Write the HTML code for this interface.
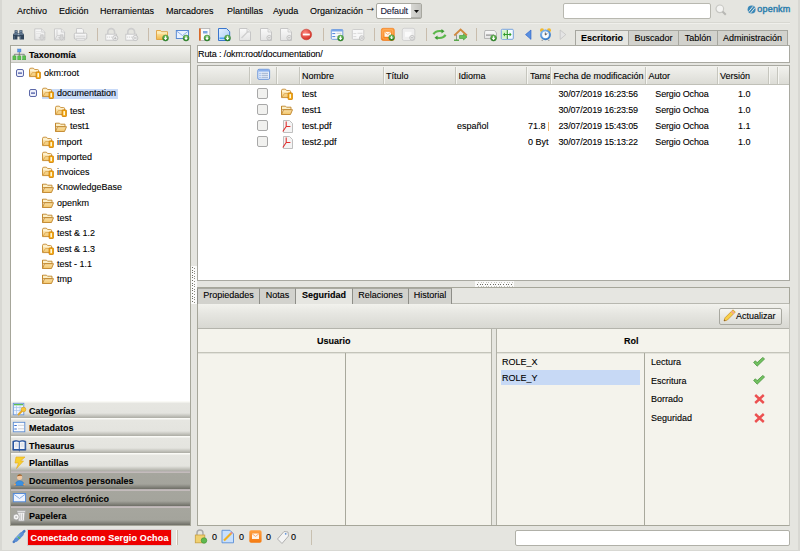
<!DOCTYPE html>
<html><head><meta charset="utf-8">
<style>
*{box-sizing:border-box;margin:0;padding:0}
html,body{width:800px;height:551px;overflow:hidden}
body{background:#e5e5e0;font-family:"Liberation Sans",sans-serif;font-size:9px;color:#000;position:relative}
.a{position:absolute}
.t{position:absolute;white-space:nowrap;line-height:11px;-webkit-text-stroke:0.1px currentColor}
svg.a{overflow:visible}
</style></head><body>
<svg width="0" height="0" style="position:absolute">
<defs>
<linearGradient id="gFold" x1="0" y1="0" x2="0" y2="1"><stop offset="0" stop-color="#fff6d8"/><stop offset="1" stop-color="#f2c56a"/></linearGradient>
<linearGradient id="gGreen" x1="0" y1="0" x2="0" y2="1"><stop offset="0" stop-color="#7ccc6a"/><stop offset="1" stop-color="#2f8a2a"/></linearGradient>
<symbol id="flock" viewBox="0 0 12 12">
 <path d="M0.5 2.6Q0.5 1.2 1.9 1.2H3.9Q4.9 1.2 5.4 2.1L5.7 2.6H8.6Q9.6 2.6 9.6 3.6V9.6H0.5Z" fill="url(#gFold)" stroke="#c4882c" stroke-width="0.9"/>
 <path d="M1.2 9L3.4 5.6H9.2" fill="none" stroke="#d8a24a" stroke-width="0.8"/>
 <path d="M1.2 3.6H9" stroke="#fff8e0" stroke-width="0.7"/>
 <rect x="7.1" y="4.9" width="4.3" height="6.6" rx="0.6" fill="#f7ac10" stroke="#cc7a00" stroke-width="0.8"/>
 <rect x="8.4" y="6.1" width="1.6" height="4.1" fill="#fff6d8"/>
</symbol>
<symbol id="fopen" viewBox="0 0 12 10">
 <path d="M0.5 1.2h4l1 1h4.5v2.5H0.5z" fill="#fbefc8" stroke="#c0852a" stroke-width="0.9"/>
 <path d="M0.5 9.5V1.2M0.5 9.5h9l2-4.8h-9z" fill="url(#gFold)" stroke="#c0852a" stroke-width="0.9"/>
</symbol>
<symbol id="pdf" viewBox="0 0 12 13">
 <path d="M1.5 0.5h6l3 3v9h-9z" fill="#f4f4f4" stroke="#b8b8b8" stroke-width="0.9"/>
 <path d="M4.2 1.5v5M4.2 6.5L0.8 11.5M4.2 6.5h4.2" fill="none" stroke="#e03030" stroke-width="1.1"/>
</symbol>
<symbol id="minus" viewBox="0 0 8 8">
 <rect x="0.5" y="0.5" width="7" height="7" rx="1.5" fill="#eef0fa" stroke="#5c68a8" stroke-width="1"/>
 <rect x="2" y="3.5" width="4" height="1.2" fill="#4050a0"/>
</symbol>
<symbol id="mag" viewBox="0 0 12 12">
 <circle cx="4.8" cy="4.8" r="3.8" fill="#f4f4f2" stroke="#c8c8c4" stroke-width="1.2"/>
 <path d="M7.5 7.5l3.3 3.3" stroke="#b8b8b4" stroke-width="2"/>
</symbol>
<symbol id="logo" viewBox="0 0 10 9">
 <circle cx="4.6" cy="4.5" r="4" fill="#3a88b8"/>
 <path d="M1.6 6.8L6.2 1.2M3.4 8.2L8 2.6" stroke="#e6e6e1" stroke-width="1"/>
</symbol>
<symbol id="check" viewBox="0 0 12 10">
 <path d="M0.6 5.4L2.4 3.8 4.2 5.6 9.8 0.4 11.6 2 4.2 9.2z" fill="#72c060" stroke="#3f8e34" stroke-width="0.7" stroke-linejoin="round"/>
</symbol>
<symbol id="cross" viewBox="0 0 11 10">
 <path d="M1.2 1L9.8 9M9.8 1L1.2 9" fill="none" stroke="#ec5050" stroke-width="2.4"/>
</symbol>
<symbol id="cb" viewBox="0 0 11 11">
 <rect x="0.5" y="0.5" width="10" height="10" rx="1.5" fill="#f1f1ef" stroke="#a8a8a8" stroke-width="1"/>
</symbol>
<symbol id="addg" viewBox="0 0 6 6">
 <circle cx="3" cy="3" r="2.8" fill="url(#gGreen)" stroke="#2a7a24" stroke-width="0.4"/>
 <path d="M3 1.3v2.6M1.9 2.9L3 4.2 4.1 2.9" fill="none" stroke="#fff" stroke-width="0.9"/>
</symbol>
</defs></svg>

<div class="a" style="left:0px;top:0px;width:2px;height:551px;background:#d8d8d3"></div>
<div class="a" style="left:798px;top:0px;width:2px;height:551px;background:#d8d8d3"></div>
<div class="a" style="left:0px;top:550px;width:800px;height:1px;background:#d8d8d3"></div>
<div class="t" style="left:17px;top:6.0px;">Archivo</div>
<div class="t" style="left:59px;top:6.0px;">Edición</div>
<div class="t" style="left:100px;top:6.0px;">Herramientas</div>
<div class="t" style="left:166px;top:6.0px;">Marcadores</div>
<div class="t" style="left:227px;top:6.0px;">Plantillas</div>
<div class="t" style="left:273px;top:6.0px;">Ayuda</div>
<div class="t" style="left:310px;top:6.0px;">Organización</div>
<div class="t" style="left:364.5px;top:1.5px;font-size:11.5px">→</div>
<div class="a" style="left:376px;top:3px;width:46px;height:16px;background:#fff;border:1px solid #a8a8a0;border-radius:2px"></div>
<div class="a" style="left:411px;top:4px;width:10px;height:14px;background:linear-gradient(90deg,#d8d8d4,#c4c4c0);border-bottom:1px solid #b0b0ac"></div>
<svg class="a" style="left:413.5px;top:10px" width="5" height="3"><path d="M0 0h5L2.5 3z" fill="#111"/></svg>
<div class="t" style="left:380.5px;top:6.0px;color:#1a1c3a;letter-spacing:-0.15px">Default</div>
<div class="a" style="left:563px;top:3px;width:148px;height:16px;background:#fff;border:1px solid #b8b8b0;border-radius:2px"></div>
<svg class="a" style="left:715px;top:4px" width="12" height="12"><use href="#mag" width="12" height="12"/></svg>
<svg class="a" style="left:747px;top:5px" width="10" height="9"><use href="#logo" width="10" height="9"/></svg>
<div class="t" style="left:757.3px;top:4.300000000000001px;font-size:9px;color:#2f80ad;letter-spacing:0.2px;-webkit-text-stroke:0.45px #2f80ad">openkm</div>
<div class="a" style="left:10px;top:22px;width:780px;height:1px;background:#d8d8d2"></div>
<div class="a" style="left:10px;top:23px;width:780px;height:1px;background:#efefeb"></div>
<div class="a" style="left:575px;top:30px;width:54px;height:16px;background:#e6e6e1;border:1px solid #a6a69f;border-bottom:none"></div>
<div class="a" style="left:628px;top:30px;width:51px;height:16px;background:#d2d2cd;border:1px solid #a6a69f;border-bottom:none"></div>
<div class="a" style="left:678px;top:30px;width:40px;height:16px;background:#d2d2cd;border:1px solid #a6a69f;border-bottom:none"></div>
<div class="a" style="left:717px;top:30px;width:71px;height:16px;background:#d2d2cd;border:1px solid #a6a69f;border-bottom:none"></div>
<div class="t" style="left:575px;top:32.5px;width:54px;text-align:center;font-weight:bold">Escritorio</div>
<div class="t" style="left:628px;top:32.5px;width:51px;text-align:center;">Buscador</div>
<div class="t" style="left:678px;top:32.5px;width:40px;text-align:center;">Tablón</div>
<div class="t" style="left:717px;top:32.5px;width:71px;text-align:center;">Administración</div>
<div class="a" style="left:97px;top:28px;width:1px;height:13px;background:#c8bcac"></div>
<div class="a" style="left:148px;top:28px;width:1px;height:13px;background:#c8bcac"></div>
<div class="a" style="left:323px;top:28px;width:1px;height:13px;background:#c8bcac"></div>
<div class="a" style="left:374px;top:28px;width:1px;height:13px;background:#c8bcac"></div>
<div class="a" style="left:426px;top:28px;width:1px;height:13px;background:#c8bcac"></div>
<div class="a" style="left:476px;top:28px;width:1px;height:13px;background:#c8bcac"></div>
<div class="a" style="left:10px;top:45px;width:181px;height:481px;background:#fff;border:1px solid #a6a69a"></div>
<div class="a" style="left:11px;top:46px;width:179px;height:17px;background:linear-gradient(#f3f3ef,#dcdcd6);border-bottom:1px solid #c4c4bc"></div>
<div class="t" style="left:29px;top:50.2px;font-weight:bold">Taxonomía</div>
<svg class="a" style="left:16px;top:69px" width="8" height="8"><use href="#minus" width="8" height="8"/></svg>
<svg class="a" style="left:29px;top:67px" width="12" height="12"><use href="#flock" width="12" height="12"/></svg>
<div class="t" style="left:44px;top:67.5px;">okm:root</div>
<div class="a" style="left:42px;top:89px;width:76px;height:10px;background:#c8daf8"></div>
<svg class="a" style="left:29px;top:89px" width="8" height="8"><use href="#minus" width="8" height="8"/></svg>
<svg class="a" style="left:42px;top:87px" width="12" height="12"><use href="#flock" width="12" height="12"/></svg>
<div class="t" style="left:57px;top:88.1px;">documentation</div>
<svg class="a" style="left:55px;top:105px" width="12" height="12"><use href="#flock" width="12" height="12"/></svg>
<div class="t" style="left:70px;top:105.5px;">test</div>
<svg class="a" style="left:55px;top:122px" width="12" height="10"><use href="#fopen" width="12" height="10"/></svg>
<div class="t" style="left:70px;top:121.0px;">test1</div>
<svg class="a" style="left:42px;top:136px" width="12" height="12"><use href="#flock" width="12" height="12"/></svg>
<div class="t" style="left:57px;top:136.5px;">import</div>
<svg class="a" style="left:42px;top:151px" width="12" height="12"><use href="#flock" width="12" height="12"/></svg>
<div class="t" style="left:57px;top:151.5px;">imported</div>
<svg class="a" style="left:42px;top:166px" width="12" height="12"><use href="#flock" width="12" height="12"/></svg>
<div class="t" style="left:57px;top:166.8px;">invoices</div>
<svg class="a" style="left:42px;top:183px" width="12" height="10"><use href="#fopen" width="12" height="10"/></svg>
<div class="t" style="left:57px;top:182.1px;">KnowledgeBase</div>
<svg class="a" style="left:42px;top:198px" width="12" height="10"><use href="#fopen" width="12" height="10"/></svg>
<div class="t" style="left:57px;top:197.5px;">openkm</div>
<svg class="a" style="left:42px;top:213px" width="12" height="10"><use href="#fopen" width="12" height="10"/></svg>
<div class="t" style="left:57px;top:212.5px;">test</div>
<svg class="a" style="left:42px;top:227px" width="12" height="12"><use href="#flock" width="12" height="12"/></svg>
<div class="t" style="left:57px;top:228.0px;">test &amp; 1.2</div>
<svg class="a" style="left:42px;top:243px" width="12" height="12"><use href="#flock" width="12" height="12"/></svg>
<div class="t" style="left:57px;top:243.5px;">test &amp; 1.3</div>
<svg class="a" style="left:42px;top:259px" width="12" height="10"><use href="#fopen" width="12" height="10"/></svg>
<div class="t" style="left:57px;top:258.5px;">test - 1.1</div>
<svg class="a" style="left:42px;top:274px" width="12" height="10"><use href="#fopen" width="12" height="10"/></svg>
<div class="t" style="left:57px;top:273.9px;">tmp</div>
<div class="a" style="left:11px;top:401px;width:179px;height:17px;background:linear-gradient(#fafaf6 0,#fafaf6 1px,#e6e6e1 2px,#e4e4df calc(100% - 5px),#acaca4 100%)"></div>
<div class="t" style="left:29px;top:405.8px;font-weight:bold">Categorías</div>
<div class="a" style="left:11px;top:418px;width:179px;height:18px;background:linear-gradient(#fafaf6 0,#fafaf6 1px,#e6e6e1 2px,#e4e4df calc(100% - 5px),#acaca4 100%)"></div>
<div class="t" style="left:29px;top:422.8px;font-weight:bold">Metadatos</div>
<div class="a" style="left:11px;top:436px;width:179px;height:17px;background:linear-gradient(#fafaf6 0,#fafaf6 1px,#e6e6e1 2px,#e4e4df calc(100% - 5px),#acaca4 100%)"></div>
<div class="t" style="left:29px;top:440.8px;font-weight:bold">Thesaurus</div>
<div class="a" style="left:11px;top:453px;width:179px;height:18px;background:linear-gradient(#fafaf6 0,#fafaf6 1px,#e6e6e1 2px,#e4e4df calc(100% - 5px),#acaca4 100%)"></div>
<div class="t" style="left:29px;top:457.8px;font-weight:bold">Plantillas</div>
<div class="a" style="left:11px;top:471px;width:179px;height:18px;background:linear-gradient(#b4aeae 0,#c4bcbc 1.5px,#a6a69e 2.5px,#a4a49c calc(100% - 5px),#6e6e66 100%)"></div>
<div class="t" style="left:29px;top:475.8px;font-weight:bold">Documentos personales</div>
<div class="a" style="left:11px;top:489px;width:179px;height:17px;background:linear-gradient(#b4aeae 0,#c4bcbc 1.5px,#a6a69e 2.5px,#a4a49c calc(100% - 5px),#6e6e66 100%)"></div>
<div class="t" style="left:29px;top:493.8px;font-weight:bold">Correo electrónico</div>
<div class="a" style="left:11px;top:506px;width:179px;height:19px;background:linear-gradient(#b4aeae 0,#c4bcbc 1.5px,#a6a69e 2.5px,#a4a49c calc(100% - 5px),#6e6e66 100%)"></div>
<div class="t" style="left:29px;top:510.79999999999995px;font-weight:bold">Papelera</div>
<div class="a" style="left:197px;top:45px;width:593px;height:18px;background:#fff;border:1px solid #a9a9a1"></div>
<div class="t" style="left:198px;top:48.5px;letter-spacing:-0.11px">Ruta : /okm:root/documentation/</div>
<div class="a" style="left:197px;top:65px;width:593px;height:216px;background:#fff;border:1px solid #a9a9a1"></div>
<div class="a" style="left:198px;top:66px;width:591px;height:19px;background:linear-gradient(#f2f2ee,#dcdcd6);border-bottom:1px solid #c0c0b8"></div>
<div class="a" style="left:249px;top:67px;width:1px;height:17px;background:#c6c6be"></div>
<div class="a" style="left:250px;top:67px;width:1px;height:17px;background:#f6f6f2"></div>
<div class="a" style="left:276px;top:67px;width:1px;height:17px;background:#c6c6be"></div>
<div class="a" style="left:277px;top:67px;width:1px;height:17px;background:#f6f6f2"></div>
<div class="a" style="left:299px;top:67px;width:1px;height:17px;background:#c6c6be"></div>
<div class="a" style="left:300px;top:67px;width:1px;height:17px;background:#f6f6f2"></div>
<div class="a" style="left:383px;top:67px;width:1px;height:17px;background:#c6c6be"></div>
<div class="a" style="left:384px;top:67px;width:1px;height:17px;background:#f6f6f2"></div>
<div class="a" style="left:455px;top:67px;width:1px;height:17px;background:#c6c6be"></div>
<div class="a" style="left:456px;top:67px;width:1px;height:17px;background:#f6f6f2"></div>
<div class="a" style="left:526px;top:67px;width:1px;height:17px;background:#c6c6be"></div>
<div class="a" style="left:527px;top:67px;width:1px;height:17px;background:#f6f6f2"></div>
<div class="a" style="left:550px;top:67px;width:1px;height:17px;background:#c6c6be"></div>
<div class="a" style="left:551px;top:67px;width:1px;height:17px;background:#f6f6f2"></div>
<div class="a" style="left:645px;top:67px;width:1px;height:17px;background:#c6c6be"></div>
<div class="a" style="left:646px;top:67px;width:1px;height:17px;background:#f6f6f2"></div>
<div class="a" style="left:717px;top:67px;width:1px;height:17px;background:#c6c6be"></div>
<div class="a" style="left:718px;top:67px;width:1px;height:17px;background:#f6f6f2"></div>
<div class="a" style="left:768px;top:67px;width:1px;height:17px;background:#c6c6be"></div>
<div class="a" style="left:769px;top:67px;width:1px;height:17px;background:#f6f6f2"></div>
<div class="a" style="left:777px;top:67px;width:1px;height:17px;background:#c6c6be"></div>
<div class="a" style="left:778px;top:67px;width:1px;height:17px;background:#f6f6f2"></div>
<div class="t" style="left:302px;top:70.8px;">Nombre</div>
<div class="t" style="left:386px;top:70.8px;">Título</div>
<div class="t" style="left:458.5px;top:70.8px;">Idioma</div>
<div class="t" style="left:553.5px;top:70.8px;">Fecha de modificación</div>
<div class="t" style="left:648.5px;top:70.8px;">Autor</div>
<div class="t" style="left:720px;top:70.8px;">Versión</div>
<div class="t" style="left:530px;top:70.8px;width:19.5px;overflow:hidden">Tamaño</div>
<svg class="a" style="left:257px;top:88px" width="11" height="11"><use href="#cb" width="11" height="11"/></svg>
<svg class="a" style="left:281px;top:88px" width="12" height="12"><use href="#flock" width="12" height="12"/></svg>
<div class="t" style="left:302px;top:88.7px;">test</div>
<div class="t" style="left:558.5px;top:88.7px;letter-spacing:-0.17px">30/07/2019 16:23:56</div>
<div class="t" style="left:655.3px;top:88.7px;letter-spacing:-0.15px">Sergio Ochoa</div>
<div class="t" style="left:738px;top:88.7px;">1.0</div>
<svg class="a" style="left:257px;top:104px" width="11" height="11"><use href="#cb" width="11" height="11"/></svg>
<svg class="a" style="left:281px;top:105px" width="12" height="10"><use href="#fopen" width="12" height="10"/></svg>
<div class="t" style="left:302px;top:104.7px;">test1</div>
<div class="t" style="left:558.5px;top:104.7px;letter-spacing:-0.17px">30/07/2019 16:23:59</div>
<div class="t" style="left:655.3px;top:104.7px;letter-spacing:-0.15px">Sergio Ochoa</div>
<div class="t" style="left:738px;top:104.7px;">1.0</div>
<svg class="a" style="left:257px;top:120px" width="11" height="11"><use href="#cb" width="11" height="11"/></svg>
<svg class="a" style="left:282px;top:120px" width="12" height="13"><use href="#pdf" width="12" height="13"/></svg>
<div class="t" style="left:302px;top:120.7px;">test.pdf</div>
<div class="t" style="left:457px;top:120.7px;">español</div>
<div class="t" style="left:528px;top:120.7px;width:21px;overflow:hidden">71.8 |</div>
<div class="t" style="left:558.5px;top:120.7px;letter-spacing:-0.17px">23/07/2019 15:43:05</div>
<div class="t" style="left:655.3px;top:120.7px;letter-spacing:-0.15px">Sergio Ochoa</div>
<div class="t" style="left:738px;top:120.7px;">1.1</div>
<svg class="a" style="left:257px;top:136px" width="11" height="11"><use href="#cb" width="11" height="11"/></svg>
<svg class="a" style="left:282px;top:136px" width="12" height="13"><use href="#pdf" width="12" height="13"/></svg>
<div class="t" style="left:302px;top:136.7px;">test2.pdf</div>
<div class="t" style="left:528px;top:136.7px;width:21px;overflow:hidden">0 Byt</div>
<div class="t" style="left:558.5px;top:136.7px;letter-spacing:-0.17px">30/07/2019 15:13:22</div>
<div class="t" style="left:655.3px;top:136.7px;letter-spacing:-0.15px">Sergio Ochoa</div>
<div class="t" style="left:738px;top:136.7px;">1.0</div>
<div class="a" style="left:197px;top:287px;width:593px;height:17px;background:#e6e6e1;border-top:1px solid #a6a69a;border-right:1px solid #a6a69a;border-bottom:1px solid #b8b8b0"></div>
<svg class="a" style="left:0;top:0" width="800" height="551" shape-rendering="crispEdges"><rect x="475" y="281" width="39" height="6" fill="#fbfbfa"/><rect x="477" y="284" width="1" height="1" fill="#6c6c62"/><rect x="478" y="282" width="1" height="1" fill="#c4c4ba"/><rect x="478" y="286" width="1" height="1" fill="#c4c4ba"/><rect x="480" y="284" width="1" height="1" fill="#6c6c62"/><rect x="481" y="282" width="1" height="1" fill="#c4c4ba"/><rect x="481" y="286" width="1" height="1" fill="#c4c4ba"/><rect x="482" y="284" width="1" height="1" fill="#6c6c62"/><rect x="483" y="282" width="1" height="1" fill="#c4c4ba"/><rect x="483" y="286" width="1" height="1" fill="#c4c4ba"/><rect x="485" y="284" width="1" height="1" fill="#6c6c62"/><rect x="486" y="282" width="1" height="1" fill="#c4c4ba"/><rect x="486" y="286" width="1" height="1" fill="#c4c4ba"/><rect x="487" y="284" width="1" height="1" fill="#6c6c62"/><rect x="488" y="282" width="1" height="1" fill="#c4c4ba"/><rect x="488" y="286" width="1" height="1" fill="#c4c4ba"/><rect x="490" y="284" width="1" height="1" fill="#6c6c62"/><rect x="491" y="282" width="1" height="1" fill="#c4c4ba"/><rect x="491" y="286" width="1" height="1" fill="#c4c4ba"/><rect x="493" y="284" width="1" height="1" fill="#6c6c62"/><rect x="494" y="282" width="1" height="1" fill="#c4c4ba"/><rect x="494" y="286" width="1" height="1" fill="#c4c4ba"/><rect x="495" y="284" width="1" height="1" fill="#6c6c62"/><rect x="496" y="282" width="1" height="1" fill="#c4c4ba"/><rect x="496" y="286" width="1" height="1" fill="#c4c4ba"/><rect x="498" y="284" width="1" height="1" fill="#6c6c62"/><rect x="499" y="282" width="1" height="1" fill="#c4c4ba"/><rect x="499" y="286" width="1" height="1" fill="#c4c4ba"/><rect x="500" y="284" width="1" height="1" fill="#6c6c62"/><rect x="501" y="282" width="1" height="1" fill="#c4c4ba"/><rect x="501" y="286" width="1" height="1" fill="#c4c4ba"/><rect x="503" y="284" width="1" height="1" fill="#6c6c62"/><rect x="504" y="282" width="1" height="1" fill="#c4c4ba"/><rect x="504" y="286" width="1" height="1" fill="#c4c4ba"/><rect x="506" y="284" width="1" height="1" fill="#6c6c62"/><rect x="507" y="282" width="1" height="1" fill="#c4c4ba"/><rect x="507" y="286" width="1" height="1" fill="#c4c4ba"/><rect x="508" y="284" width="1" height="1" fill="#6c6c62"/><rect x="509" y="282" width="1" height="1" fill="#c4c4ba"/><rect x="509" y="286" width="1" height="1" fill="#c4c4ba"/><rect x="511" y="284" width="1" height="1" fill="#6c6c62"/><rect x="512" y="282" width="1" height="1" fill="#c4c4ba"/><rect x="512" y="286" width="1" height="1" fill="#c4c4ba"/><rect x="191" y="266" width="6" height="38" fill="#fbfbfa"/><rect x="192" y="267" width="1" height="1" fill="#6c6c62"/><rect x="194" y="268" width="1" height="1" fill="#8c8c82"/><rect x="192" y="270" width="1" height="1" fill="#6c6c62"/><rect x="194" y="271" width="1" height="1" fill="#8c8c82"/><rect x="192" y="272" width="1" height="1" fill="#6c6c62"/><rect x="194" y="273" width="1" height="1" fill="#8c8c82"/><rect x="192" y="275" width="1" height="1" fill="#6c6c62"/><rect x="194" y="276" width="1" height="1" fill="#8c8c82"/><rect x="192" y="277" width="1" height="1" fill="#6c6c62"/><rect x="194" y="278" width="1" height="1" fill="#8c8c82"/><rect x="192" y="280" width="1" height="1" fill="#6c6c62"/><rect x="194" y="281" width="1" height="1" fill="#8c8c82"/><rect x="192" y="283" width="1" height="1" fill="#6c6c62"/><rect x="194" y="284" width="1" height="1" fill="#8c8c82"/><rect x="192" y="285" width="1" height="1" fill="#6c6c62"/><rect x="194" y="286" width="1" height="1" fill="#8c8c82"/><rect x="192" y="288" width="1" height="1" fill="#6c6c62"/><rect x="194" y="289" width="1" height="1" fill="#8c8c82"/><rect x="192" y="290" width="1" height="1" fill="#6c6c62"/><rect x="194" y="291" width="1" height="1" fill="#8c8c82"/><rect x="192" y="293" width="1" height="1" fill="#6c6c62"/><rect x="194" y="294" width="1" height="1" fill="#8c8c82"/><rect x="192" y="296" width="1" height="1" fill="#6c6c62"/><rect x="194" y="297" width="1" height="1" fill="#8c8c82"/><rect x="192" y="298" width="1" height="1" fill="#6c6c62"/><rect x="194" y="299" width="1" height="1" fill="#8c8c82"/><rect x="192" y="301" width="1" height="1" fill="#6c6c62"/><rect x="194" y="302" width="1" height="1" fill="#8c8c82"/></svg>
<div class="a" style="left:197px;top:288px;width:63px;height:17px;background:#d2d2cd;border:1px solid #8e8e88;border-bottom:none;border-top-color:#a9a9a1"></div>
<div class="a" style="left:259px;top:288px;width:37px;height:17px;background:#d2d2cd;border:1px solid #8e8e88;border-bottom:none;border-top-color:#a9a9a1"></div>
<div class="a" style="left:295px;top:288px;width:58px;height:17px;background:#e6e6e1;border:1px solid #8e8e88;border-bottom:none;border-top-color:#a9a9a1"></div>
<div class="a" style="left:352px;top:288px;width:57px;height:17px;background:#d2d2cd;border:1px solid #8e8e88;border-bottom:none;border-top-color:#a9a9a1"></div>
<div class="a" style="left:408px;top:288px;width:44px;height:17px;background:#d2d2cd;border:1px solid #8e8e88;border-bottom:none;border-top-color:#a9a9a1"></div>
<div class="t" style="left:197px;top:289.5px;width:63px;text-align:center;">Propiedades</div>
<div class="t" style="left:259px;top:289.5px;width:37px;text-align:center;">Notas</div>
<div class="t" style="left:295px;top:289.5px;width:58px;text-align:center;font-weight:bold">Seguridad</div>
<div class="t" style="left:352px;top:289.5px;width:57px;text-align:center;">Relaciones</div>
<div class="t" style="left:408px;top:289.5px;width:44px;text-align:center;">Historial</div>
<div class="a" style="left:197px;top:304px;width:593px;height:222px;background:#f4f3ec;border:1px solid #a6a69a;border-right-color:#c4c4bc;border-top:none"></div>
<div class="a" style="left:198px;top:304px;width:591px;height:25px;background:linear-gradient(#f2f2ed,#e6e6e1 40%,#d8d8d2);border-bottom:1px solid #b4b4ac"></div>
<div class="a" style="left:719px;top:308px;width:63px;height:17px;background:linear-gradient(#f6f6f2,#dcdcd6);border:1px solid #a8a8a0;border-radius:2px"></div>
<div class="t" style="left:736px;top:311.0px;">Actualizar</div>
<div class="a" style="left:491px;top:329px;width:6px;height:196px;background:#e6e6e0;border-left:1px solid #b0b0a6;border-right:1px solid #b0b0a6"></div>
<div class="a" style="left:198px;top:352px;width:293px;height:1px;background:#c4c4ba"></div>
<div class="a" style="left:198px;top:353px;width:293px;height:1px;background:#e2e2da"></div>
<div class="a" style="left:497px;top:352px;width:292px;height:1px;background:#c4c4ba"></div>
<div class="a" style="left:497px;top:353px;width:292px;height:1px;background:#e2e2da"></div>
<div class="a" style="left:345px;top:353px;width:1px;height:172px;background:#a8a89c"></div>
<div class="a" style="left:644px;top:353px;width:1px;height:172px;background:#a8a89c"></div>
<div class="t" style="left:317px;top:335.7px;font-weight:bold">Usuario</div>
<div class="t" style="left:624px;top:335.7px;font-weight:bold">Rol</div>
<div class="t" style="left:502px;top:356.5px;">ROLE_X</div>
<div class="a" style="left:501px;top:370px;width:139px;height:15px;background:#c7d9f5"></div>
<div class="t" style="left:502px;top:372.7px;">ROLE_Y</div>
<div class="t" style="left:651px;top:357.3px;">Lectura</div>
<svg class="a" style="left:753px;top:357px" width="12" height="10"><use href="#check" width="12" height="10"/></svg>
<div class="t" style="left:651px;top:375.9px;">Escritura</div>
<svg class="a" style="left:753px;top:375px" width="12" height="10"><use href="#check" width="12" height="10"/></svg>
<div class="t" style="left:651px;top:393.9px;">Borrado</div>
<svg class="a" style="left:754px;top:394px" width="11" height="10"><use href="#cross" width="11" height="10"/></svg>
<div class="t" style="left:651px;top:412.5px;">Seguridad</div>
<svg class="a" style="left:754px;top:413px" width="11" height="10"><use href="#cross" width="11" height="10"/></svg>
<div class="a" style="left:27px;top:529px;width:145px;height:17px;background:#ee0000;border:1px solid #d4cccc"></div>
<div class="t" style="left:30.5px;top:532.8px;font-weight:bold;color:#fff;letter-spacing:0.15px">Conectado como Sergio Ochoa</div>
<div class="a" style="left:311px;top:530px;width:1px;height:15px;background:#c8c0b0"></div>
<div class="a" style="left:177px;top:530px;width:1px;height:15px;background:#c8c0b0"></div>
<div class="a" style="left:176px;top:530px;width:1px;height:15px;background:#fafaf8"></div>
<div class="t" style="left:212px;top:532.0px;">0</div>
<div class="t" style="left:239px;top:532.0px;">0</div>
<div class="t" style="left:266px;top:532.0px;">0</div>
<div class="t" style="left:291px;top:532.0px;">0</div>
<div class="a" style="left:515px;top:530px;width:275px;height:16px;background:#fff;border:1px solid #b0b0a8;border-radius:2px"></div>
<svg class="a" style="left:0;top:0" width="800" height="551" viewBox="0 0 800 551">
<defs>
<linearGradient id="gG" x1="0" y1="0" x2="0" y2="1"><stop offset="0" stop-color="#86d070"/><stop offset="1" stop-color="#1f7a1c"/></linearGradient>
<linearGradient id="gBlueDoc" x1="0" y1="0" x2="1" y2="1"><stop offset="0" stop-color="#e4f0ff"/><stop offset="1" stop-color="#a8ccf4"/></linearGradient>
<linearGradient id="gFoldT" x1="0" y1="0" x2="0" y2="1"><stop offset="0" stop-color="#fff2c0"/><stop offset="1" stop-color="#f0b848"/></linearGradient>
<linearGradient id="gOr" x1="0" y1="0" x2="0" y2="1"><stop offset="0" stop-color="#ffa040"/><stop offset="1" stop-color="#f47a10"/></linearGradient>
<linearGradient id="gGray" x1="0" y1="0" x2="0" y2="1"><stop offset="0" stop-color="#fafafa"/><stop offset="1" stop-color="#e4e4e4"/></linearGradient>
<radialGradient id="gRed" cx="0.4" cy="0.35" r="0.7"><stop offset="0" stop-color="#ff8a80"/><stop offset="1" stop-color="#d02a20"/></radialGradient>
<radialGradient id="gClock" cx="0.4" cy="0.35" r="0.7"><stop offset="0" stop-color="#a8d4ff"/><stop offset="1" stop-color="#2a70c0"/></radialGradient>
<symbol id="add" viewBox="0 0 7 7" overflow="visible"><circle cx="3.5" cy="3.5" r="3.2" fill="url(#gG)" stroke="#1c6e1a" stroke-width="0.5"/><path d="M3.5 1.6v3M2.2 3.3L3.5 5 4.8 3.3" fill="none" stroke="#fff" stroke-width="1.1"/></symbol>
<symbol id="addgray" viewBox="0 0 7 7" overflow="visible"><circle cx="3.5" cy="3.5" r="3" fill="#e8e8e8" stroke="#b0b0b0" stroke-width="0.8"/><path d="M2 3.5h3" stroke="#b0b0b0" stroke-width="1"/></symbol>
<symbol id="gdoc" viewBox="0 0 12 13" overflow="visible"><path d="M0.5 0.5h7.5l3.5 3.5v8.5H0.5z" fill="url(#gGray)" stroke="#c6c6c6" stroke-width="1"/><path d="M8 0.5v3.5h3.5" fill="#eee" stroke="#c6c6c6" stroke-width="0.8"/></symbol>
</defs>


<!-- taxonomy icon -->
<rect x="17.7" y="49" width="3.3" height="3" fill="#5a9ae8" stroke="#3a70c0" stroke-width="0.4"/>
<path d="M19.3 52v2.2M14.4 54.3h10M14.4 54.3v1.5M19.3 54.3v1.5M24.2 54.3v1.5" stroke="#606060" stroke-width="0.7" fill="none"/>
<rect x="12.9" y="55.9" width="3.1" height="3.9" fill="#5cc050" stroke="#2e9a2a" stroke-width="0.4"/>
<rect x="17.8" y="55.9" width="3.1" height="3.9" fill="#5cc050" stroke="#2e9a2a" stroke-width="0.4"/>
<rect x="22.7" y="55.9" width="3.1" height="3.9" fill="#5cc050" stroke="#2e9a2a" stroke-width="0.4"/>
<!-- column list icon -->
<rect x="257.8" y="69.3" width="11.8" height="10" rx="1.2" fill="#e8f0fc" stroke="#5a8ad8" stroke-width="0.9"/>
<rect x="258.3" y="69.8" width="10.8" height="1.8" fill="#8ab0ec"/>
<path d="M259.5 73.3h1M259.5 75.3h1M259.5 77.3h1" stroke="#4a80d8" stroke-width="0.9"/>
<path d="M261.5 73.3h6.5M261.5 75.3h6.5M261.5 77.3h6.5" stroke="#8aa0c0" stroke-width="0.8"/>
<!-- TOOLBAR -->
<!-- binoculars -->
<path d="M13 39.6V35.2Q13 33.2 14.6 33V30.3H17.6V33.2H19.4V30.3H22.4V33Q24 33.2 24 35.2V39.6H19.6V36.4H17.4V39.6Z" fill="#30445a"/>
<path d="M15.2 30.8h1.8v1.8h-1.8zM20 30.8h1.8v1.8h-1.8z" fill="#7890aa"/>
<path d="M14 34h3M20 34h3" stroke="#8aa2bc" stroke-width="1"/>
<path d="M14.2 36v3M20.6 36v3" stroke="#5a7088" stroke-width="0.9"/>
<path d="M17.4 33.6h2.2v1.6h-2.2z" fill="#a0b4c8"/>
<!-- doc dl gray -->
<use href="#gdoc" x="34.3" y="28.3" width="11" height="12.2"/>
<path d="M36 31.5h6M36 33.5h5" stroke="#e0e0e0" stroke-width="0.7"/>
<path d="M40.6 34.8h2.6v2.6h1.6l-2.9 3-2.9-3h1.6z" fill="#d6d6d6" stroke="#c0c0c0" stroke-width="0.6"/>
<use href="#gdoc" x="54" y="28.3" width="11" height="12.2"/>
<path d="M57 30v5.5l-2 4M57 35.5h3" fill="none" stroke="#cfcfcf" stroke-width="0.9"/>
<path d="M60.3 34.8h2.6v2.6h1.6l-2.9 3-2.9-3h1.6z" fill="#d6d6d6" stroke="#c0c0c0" stroke-width="0.6"/>
<!-- printer -->
<path d="M76.5 28.5h5.5l1.5 1.5v3.5h-7z" fill="#f6f6f6" stroke="#c8c8c8" stroke-width="0.9"/>
<rect x="74.3" y="33.2" width="12.5" height="6" rx="1.2" fill="url(#gGray)" stroke="#c0c0c0" stroke-width="0.9"/>
<rect x="76" y="35.6" width="9" height="1.4" fill="#dcdcdc"/>
<rect x="76.3" y="39" width="8.5" height="1.5" fill="#f4f4f4" stroke="#c8c8c8" stroke-width="0.6"/>
<!-- locks gray -->
<g fill="none" stroke="#cdcdcd" stroke-width="1.6"><path d="M107.8 34.3v-2.3a3.4 3.4 0 0 1 6.8 0v2.3"/><path d="M127.8 34.3v-2.3a3.4 3.4 0 0 1 6.8 0v2.3"/></g>
<rect x="105.8" y="34.2" width="10.8" height="6" fill="#f8f8f8" stroke="#c6c6c6" stroke-width="0.9"/>
<rect x="125.8" y="34.2" width="10.8" height="6" fill="#f8f8f8" stroke="#c6c6c6" stroke-width="0.9"/>
<path d="M107 37.2h6M127 37.2h6" stroke="#d8d8d8" stroke-width="1.2" stroke-dasharray="1.2 0.8"/>
<circle cx="115.3" cy="38" r="2.6" fill="#eeeeee" stroke="#bdbdbd" stroke-width="0.8"/>
<path d="M115.3 36.8v2.2M114.3 38.2l1 1 1-1" fill="none" stroke="#a8a8a8" stroke-width="0.7"/>
<circle cx="135.3" cy="38" r="2.6" fill="#eeeeee" stroke="#bdbdbd" stroke-width="0.8"/>
<path d="M134 38h2.6" stroke="#a8a8a8" stroke-width="0.8"/>
<!-- folder add -->
<path d="M156.5 30.5h4l1 1.2h6v7.8h-11z" fill="url(#gFoldT)" stroke="#e0a040" stroke-width="0.9"/>
<path d="M157 33h10" stroke="#fff6d0" stroke-width="0.8"/>
<use href="#add" x="162.3" y="34.8" width="6.5" height="6.5"/>
<!-- mail add -->
<rect x="176.3" y="30.5" width="12.2" height="8" fill="#eaf2ff" stroke="#4a80d0" stroke-width="0.9"/>
<path d="M176.5 31l6 4.5 6-4.5" fill="none" stroke="#7aa0e0" stroke-width="0.8"/>
<use href="#add" x="182.8" y="34.8" width="6.5" height="6.5"/>
<!-- notebook add -->
<rect x="199.5" y="28.5" width="10.3" height="12" fill="#fafafa" stroke="#b8b8b8" stroke-width="0.9"/>
<rect x="199" y="28.5" width="1.8" height="12" fill="#d86a2a"/>
<rect x="203" y="31" width="4.5" height="2.5" fill="#7ea6e0"/>
<use href="#add" x="203.8" y="34.8" width="6.5" height="6.5"/>
<!-- blue doc add -->
<path d="M218.5 28.5h8l3.2 3.2v8.8h-11.2z" fill="url(#gBlueDoc)" stroke="#3a76cc" stroke-width="1"/>
<rect x="219.5" y="37.5" width="6" height="1.5" fill="#4aa0f0"/>
<use href="#add" x="224.3" y="34.8" width="6.5" height="6.5"/>
<!-- edit gray -->
<use href="#gdoc" x="239" y="28" width="12" height="13"/>
<path d="M241.5 38l7-7" stroke="#d0d0d0" stroke-width="1.5"/>
<use href="#gdoc" x="260" y="28" width="12" height="13"/>
<use href="#addgray" x="266.5" y="35" width="5.5" height="5.5"/>
<use href="#gdoc" x="280" y="28" width="12" height="13"/>
<use href="#addgray" x="286.5" y="35" width="5.5" height="5.5"/>
<!-- red minus -->
<circle cx="306.3" cy="34.5" r="5.3" fill="url(#gRed)" stroke="#c83a30" stroke-width="0.6"/>
<rect x="302.8" y="33.6" width="7" height="1.8" fill="#fff"/>
<!-- property add -->
<rect x="331.3" y="29.5" width="11.5" height="9.8" rx="1" fill="#fafcff" stroke="#6a96d8" stroke-width="0.9"/>
<rect x="331.3" y="29.5" width="11.5" height="2" fill="#7aa6e8"/>
<path d="M332.3 33.6h3M332.3 36.6h3" stroke="#4a80d8" stroke-width="1"/>
<path d="M336.5 33.3h5M336.5 36.3h3" stroke="#b8b8b8" stroke-width="0.7"/>
<use href="#add" x="337.3" y="34.8" width="6.5" height="6.5"/>
<!-- property gray -->
<rect x="352.3" y="29.5" width="11.5" height="9.8" rx="1" fill="#f8f8f8" stroke="#cacaca" stroke-width="0.9"/>
<path d="M353.3 33.6h3M353.3 36.6h3M357.5 33.3h5" stroke="#d0d0d0" stroke-width="0.8"/>
<use href="#addgray" x="359" y="35.3" width="5.5" height="5.5"/>
<!-- orange mail -->
<rect x="381.3" y="28.3" width="13" height="12.2" rx="1.8" fill="url(#gOr)" stroke="#f07818" stroke-width="0.6"/>
<rect x="382.8" y="29.8" width="10" height="9.2" rx="1" fill="none" stroke="#ffb870" stroke-width="0.8"/>
<rect x="384.5" y="31.8" width="6.5" height="5" fill="#fff6ec"/>
<path d="M384.5 32l3.25 2.5 3.25-2.5" fill="none" stroke="#f8a050" stroke-width="0.8"/>
<use href="#add" x="388.5" y="34.5" width="6.2" height="6.2"/>
<!-- gray mail -->
<rect x="402.3" y="28.3" width="12.5" height="12.2" rx="1.8" fill="#eeeeee" stroke="#cccccc" stroke-width="0.8"/>
<rect x="405" y="31.8" width="6.5" height="5" fill="#fafafa"/>
<use href="#addgray" x="409.3" y="35" width="5.5" height="5.5"/>
<!-- refresh -->
<path d="M433.5 34.2c1.5-3 5-3.5 8.5-3" fill="none" stroke="#5cb84c" stroke-width="2.2"/>
<path d="M441.5 29l3 2.2-3 2.2z" fill="#3a9a32"/>
<path d="M445.5 34.8c-1.5 3-5 3.5-8.5 3" fill="none" stroke="#5cb84c" stroke-width="2.2"/>
<path d="M437.5 40l-3-2.2 3-2.2z" fill="#3a9a32"/>
<!-- home -->
<path d="M454.3 35.5l6.3-6 6.3 6" fill="none" stroke="#d08a40" stroke-width="1.8"/>
<path d="M456.5 34.5v5.5" stroke="#8a8a8a" stroke-width="0.9"/>
<path d="M454 40.2h5" stroke="#4aa03c" stroke-width="1.4"/>
<path d="M459.5 35.5h4v-1.5l3.5 3-3.5 3v-1.5h-4z" fill="#6ac05a" stroke="#3a9a32" stroke-width="0.6"/>
<!-- scanner add -->
<path d="M485 30.5h9.5l2 2.5v5.5H484.5v-5.5z" fill="url(#gGray)" stroke="#b0b0b0" stroke-width="0.9"/>
<rect x="486" y="34.5" width="8" height="1.2" fill="#909090"/>
<use href="#add" x="490.3" y="34.8" width="6.5" height="6.5"/>
<!-- split -->
<rect x="501.3" y="29.3" width="12" height="10" rx="1" fill="#f4fbff" stroke="#6a9ad8" stroke-width="0.9"/>
<rect x="502" y="30.3" width="5" height="8.3" fill="#d4f4c8"/>
<path d="M507.3 30v9" stroke="#2e8a2a" stroke-width="1"/>
<path d="M503 34.5l2-2v4zM511.6 34.5l-2-2v4z" fill="#2e9a2a"/>
<path d="M504.5 34.5h5.5" stroke="#2e9a2a" stroke-width="1"/>
<!-- left tri -->
<path d="M531 30L525.5 34.6 531 39.4z" fill="#5a90e0" stroke="#2a5ec8" stroke-width="0.6"/>
<!-- clock -->
<circle cx="542" cy="30.3" r="2" fill="#f0b830"/>
<circle cx="549" cy="30.3" r="2" fill="#f0b830"/>
<circle cx="545.5" cy="34.8" r="5.4" fill="url(#gClock)"/>
<circle cx="545.5" cy="34.8" r="3.4" fill="#fafcff"/>
<path d="M545.3 32.5v2.5l2-1.5" fill="none" stroke="#444" stroke-width="0.9"/>
<path d="M541.5 40.3h1.5M548 40.3h1.5" stroke="#888" stroke-width="0.8"/>
<!-- right tri -->
<path d="M560.2 30L565.8 34.6 560.2 39.4z" fill="#e4e4e4" stroke="#b8b8b8" stroke-width="0.6"/>

<!-- ACCORDION ICONS -->
<!-- categorias -->
<rect x="13.3" y="403.3" width="10.5" height="11.5" fill="#eef4ff" stroke="#6a96d8" stroke-width="0.9"/>
<rect x="14" y="404" width="9" height="1.3" fill="#5cc050"/>
<path d="M14 407.5h9M14 410.5h9M16.5 405.5v9M20 405.5v9" stroke="#a8c4ec" stroke-width="0.7"/>
<path d="M18 415l4-4" stroke="#e8a820" stroke-width="1.8"/>
<circle cx="23.5" cy="409.5" r="2.3" fill="#f8c838" stroke="#d89818" stroke-width="0.6"/>
<!-- metadatos -->
<rect x="13.3" y="422.3" width="11.5" height="9.5" fill="#fafcff" stroke="#5a8ad0" stroke-width="0.9"/>
<path d="M14.3 425.5h2.5M14.3 429h2.5" stroke="#3a70d0" stroke-width="1"/>
<path d="M18 425.3h6M18 428.8h6" stroke="#b0b0b0" stroke-width="0.6"/>
<!-- thesaurus book -->
<path d="M12.8 441.2Q16 440 19.3 441.2Q22.6 440 25.8 441.2V450.2H20.2L19.3 451L18.4 450.2H12.8Z" fill="#2a5aa8" stroke="#1c4288" stroke-width="0.6"/>
<path d="M14 442Q16.5 441.2 18.8 442V449H14ZM19.8 442Q22.2 441.2 24.6 442V449H19.8Z" fill="#f2f4f8"/>
<path d="M15 444h2.8M15 446h2.8M20.8 444h2.8M20.8 446h2.8" stroke="#c4c8d0" stroke-width="0.6"/>
<!-- plantillas lightning -->
<path d="M16 457h9l-4.5 4h3l-7 7.5 2-5.5h-3.5z" fill="#f8d030" stroke="#e4a818" stroke-width="0.6"/>
<!-- person -->
<circle cx="19.6" cy="477.3" r="2.6" fill="#f2c8a0"/>
<path d="M17 476.5a2.7 2.7 0 0 1 5.3-0.3c-1.5-0.6-3.5-0.6-5.3 0.3z" fill="#9a5a20"/>
<path d="M15 485.5c0-3 2-4.8 4.6-4.8s4.6 1.8 4.6 4.8z" fill="#3a90e0" stroke="#2a70c0" stroke-width="0.5"/>
<circle cx="15" cy="484.5" r="1" fill="#f0a050"/><circle cx="24.2" cy="484.5" r="1" fill="#f0a050"/>
<!-- mail -->
<rect x="13.3" y="493.5" width="12.3" height="8.3" fill="#eef4ff" stroke="#4a84d8" stroke-width="0.9"/>
<path d="M13.5 494l6 4.5 6-4.5" fill="none" stroke="#6a9ae0" stroke-width="0.8"/>
<!-- trash -->
<path d="M17.6 511.8h7.4l-0.7 9.2h-6z" fill="#f4f4f4" stroke="#a4a4a4" stroke-width="0.8"/>
<rect x="17" y="510.6" width="8.6" height="1.8" rx="0.6" fill="#e8e8e8" stroke="#9c9c9c" stroke-width="0.6"/>
<path d="M20.2 513.5v6.5M22.4 513.5v6.5" stroke="#b8b8b8" stroke-width="0.8"/>
<circle cx="16.2" cy="517" r="3" fill="#f6f6f6" stroke="#a0a0a0" stroke-width="0.8"/>
<circle cx="16.2" cy="517" r="1.1" fill="#c0c0c0"/>
<!-- STATUS -->
<!-- connector -->
<path d="M13.8 541.8l3.2-3.2M20.5 535l3.8-3.8" stroke="#4a7cc4" stroke-width="2.6" stroke-linecap="round"/>
<path d="M16 539.8l5.8-5.8" stroke="#5a8ed4" stroke-width="4" stroke-linecap="round"/>
<path d="M17.5 536.2l2.6 2.6" stroke="#5cc04a" stroke-width="1.1"/>
<path d="M16.5 538l3.5-3.5" stroke="#9cc4f0" stroke-width="0.8"/>
<!-- lock status -->
<path d="M197 535v-2a3 3 0 0 1 6 0v2" fill="none" stroke="#a8a8a8" stroke-width="1.4"/>
<rect x="195.3" y="535" width="9.5" height="7.8" fill="#f0d070" stroke="#c8a040" stroke-width="0.8"/>
<circle cx="204" cy="540.5" r="2.8" fill="#60b850" stroke="#2a8a24" stroke-width="0.5"/>
<!-- edit status -->
<path d="M222 530.3h8l3.5 3.5v9h-11.5z" fill="#c8e0fc" stroke="#5a90d8" stroke-width="0.9"/>
<path d="M224 540.5l7-7" stroke="#f0b020" stroke-width="2.2"/>
<path d="M231 533.5l1-1" stroke="#f08080" stroke-width="2.2"/>
<!-- orange mail status -->
<rect x="249.3" y="530.3" width="12.3" height="12.5" rx="1.8" fill="url(#gOr)"/>
<rect x="252" y="533.5" width="7" height="5.5" fill="#fff4e8"/>
<path d="M252 533.7l3.5 2.7 3.5-2.7" fill="none" stroke="#f89850" stroke-width="0.8"/>
<!-- tag -->
<path d="M277.5 539l6.5-7.5 4 0.5 0.5 4-6.5 7.5z" fill="#f4f4f4" stroke="#a8a8a8" stroke-width="0.9"/>
<circle cx="285.7" cy="533.8" r="0.9" fill="#5a90d8"/>

<!-- pencil Actualizar -->
<path d="M724 321l1-3.2 8-8 2.3 2.3-8 8z" fill="#f8d048" stroke="#c88a20" stroke-width="0.7"/>
<path d="M731.5 311.3l2.3 2.3" stroke="#f0a0a0" stroke-width="1.5"/>
<path d="M724 321l0.5-1.6 1.1 1.1z" fill="#6a4a20"/>
</svg>

</body></html>
